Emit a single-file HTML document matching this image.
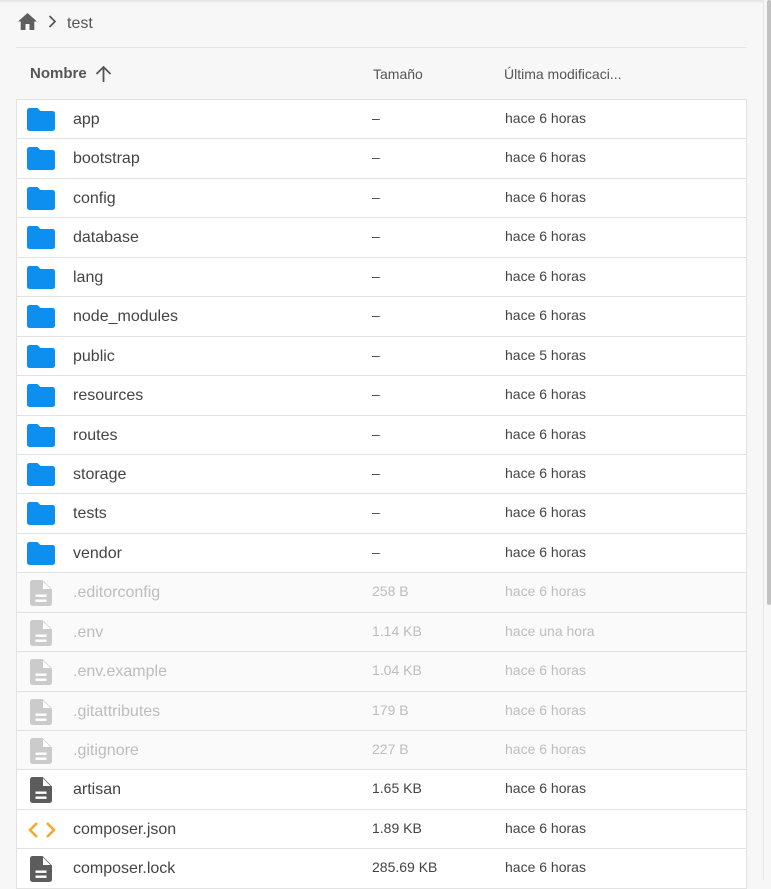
<!DOCTYPE html>
<html><head><meta charset="utf-8"><style>
*{box-sizing:border-box;margin:0;padding:0}
body{width:771px;height:880px;overflow:hidden;background:#f7f7f7;font-family:"Liberation Sans",Arial,sans-serif;position:relative}
.top{position:absolute;left:0;top:0;width:763px;height:4px;background:linear-gradient(#e4e4e4,#f7f7f7)}
.sb{position:absolute;left:763px;top:0;width:1px;height:880px;background:#e6e6e6}
.sbbg{position:absolute;left:764px;top:0;width:7px;height:880px;background:#f7f7f7}
.thumb{position:absolute;left:767px;top:0;width:4px;height:605px;background:#c1c1c1;border-radius:2px}
.crumb{position:absolute;top:13px;left:18px;height:18px;color:#555;font-size:16px}
.hr{position:absolute;left:16px;top:47px;width:731px;height:1px;background:#e6e6e6}
.head{position:absolute;top:64px;font-size:14px;color:#555}
.table{position:absolute;left:16px;top:99px;width:731px;background:#fff;border:1px solid #e2e2e2;border-bottom:none}
.row{height:39.45px;border-bottom:1px solid #e2e2e2;position:relative;font-size:16px;color:#444}
.row.h{background:#fafafa;color:#bdbdbd}
.row .n{position:absolute;left:56px;top:11px}
.row .s{position:absolute;left:355px;top:10px;font-size:14px}
.row .d{position:absolute;left:488px;top:10px;font-size:14px}
.row svg{position:absolute}
</style></head><body>
<div class="top"></div>
<div class="sb"></div><div class="sbbg"></div><div class="thumb"></div>
<div class="crumb">
<svg style="position:absolute;left:0;top:0" width="19" height="17" viewBox="0 0 19 17"><path d="M9.5 0L0 8.5h2.7V17h4.8v-6h4v6h4.8V8.5H19z" fill="#5f5f5f"/></svg>
<svg style="position:absolute;left:30px;top:2px" width="9" height="13" viewBox="0 0 9 13"><path d="M1.5 1l5.5 5.5-5.5 5.5" stroke="#555" stroke-width="1.7" fill="none"/></svg>
<span style="position:absolute;left:49px;top:2px">test</span></div>
<div class="hr"></div>
<div class="head" style="left:30px;font-weight:bold;font-size:15px;color:#555;top:65px">Nombre</div>
<svg style="position:absolute;left:95px;top:66px" width="17" height="16" viewBox="0 0 17 16"><path d="M8.5 1v15M1.5 8l7-7 7 7" stroke="#555" stroke-width="1.8" fill="none"/></svg>
<div class="head" style="left:373px;top:66px">Tamaño</div>
<div class="head" style="left:504px;top:66px">Última modificaci...</div>
<div class="table" id="t"></div>
<script>
var F='<svg style="left:10px;top:8px" width="28" height="23" viewBox="0 0 28 23"><path d="M2.5 0h8l3 3h12a2.5 2.5 0 0 1 2.5 2.5v15a2.5 2.5 0 0 1-2.5 2.5h-23A2.5 2.5 0 0 1 0 20.5v-18A2.5 2.5 0 0 1 2.5 0z" fill="#0d8ff0"/></svg>';
function D(c){return '<svg style="left:13px;top:7px" width="22" height="26" viewBox="0 0 22 26"><path d="M2.5 0h10L22 9.5v14a2.5 2.5 0 0 1-2.5 2.5h-17A2.5 2.5 0 0 1 0 23.5v-21A2.5 2.5 0 0 1 2.5 0z" fill="'+c+'"/><path d="M13 1.5v7.5h7.5z" fill="#fff"/><rect x="5.5" y="14.5" width="11" height="2.4" fill="#fff"/><rect x="5.5" y="19.5" width="11" height="2.4" fill="#fff"/></svg>'}
var J='<svg style="left:11px;top:11px" width="28" height="18" viewBox="0 0 28 18"><path d="M9 2L2 9l7 7M19 2l7 7-7 7" stroke="#f8a92b" stroke-width="2.6" fill="none"/></svg>';
var rows=[["app",0,"–","hace 6 horas"],["bootstrap",0,"–","hace 6 horas"],["config",0,"–","hace 6 horas"],["database",0,"–","hace 6 horas"],["lang",0,"–","hace 6 horas"],["node_modules",0,"–","hace 6 horas"],["public",0,"–","hace 5 horas"],["resources",0,"–","hace 6 horas"],["routes",0,"–","hace 6 horas"],["storage",0,"–","hace 6 horas"],["tests",0,"–","hace 6 horas"],["vendor",0,"–","hace 6 horas"],[".editorconfig",1,"258 B","hace 6 horas"],[".env",1,"1.14 KB","hace una hora"],[".env.example",1,"1.04 KB","hace 6 horas"],[".gitattributes",1,"179 B","hace 6 horas"],[".gitignore",1,"227 B","hace 6 horas"],["artisan",2,"1.65 KB","hace 6 horas"],["composer.json",3,"1.89 KB","hace 6 horas"],["composer.lock",2,"285.69 KB","hace 6 horas"]];
var h='';rows.forEach(function(r){var ic=r[1]==0?F:r[1]==1?D('#cbcbcb'):r[1]==2?D('#5c5c5c'):J;
h+='<div class="row'+(r[1]==1?' h':'')+'">'+ic+'<span class="n">'+r[0]+'</span><span class="s">'+r[2]+'</span><span class="d">'+r[3]+'</span></div>'});
document.getElementById('t').innerHTML=h;
</script>
</body></html>
